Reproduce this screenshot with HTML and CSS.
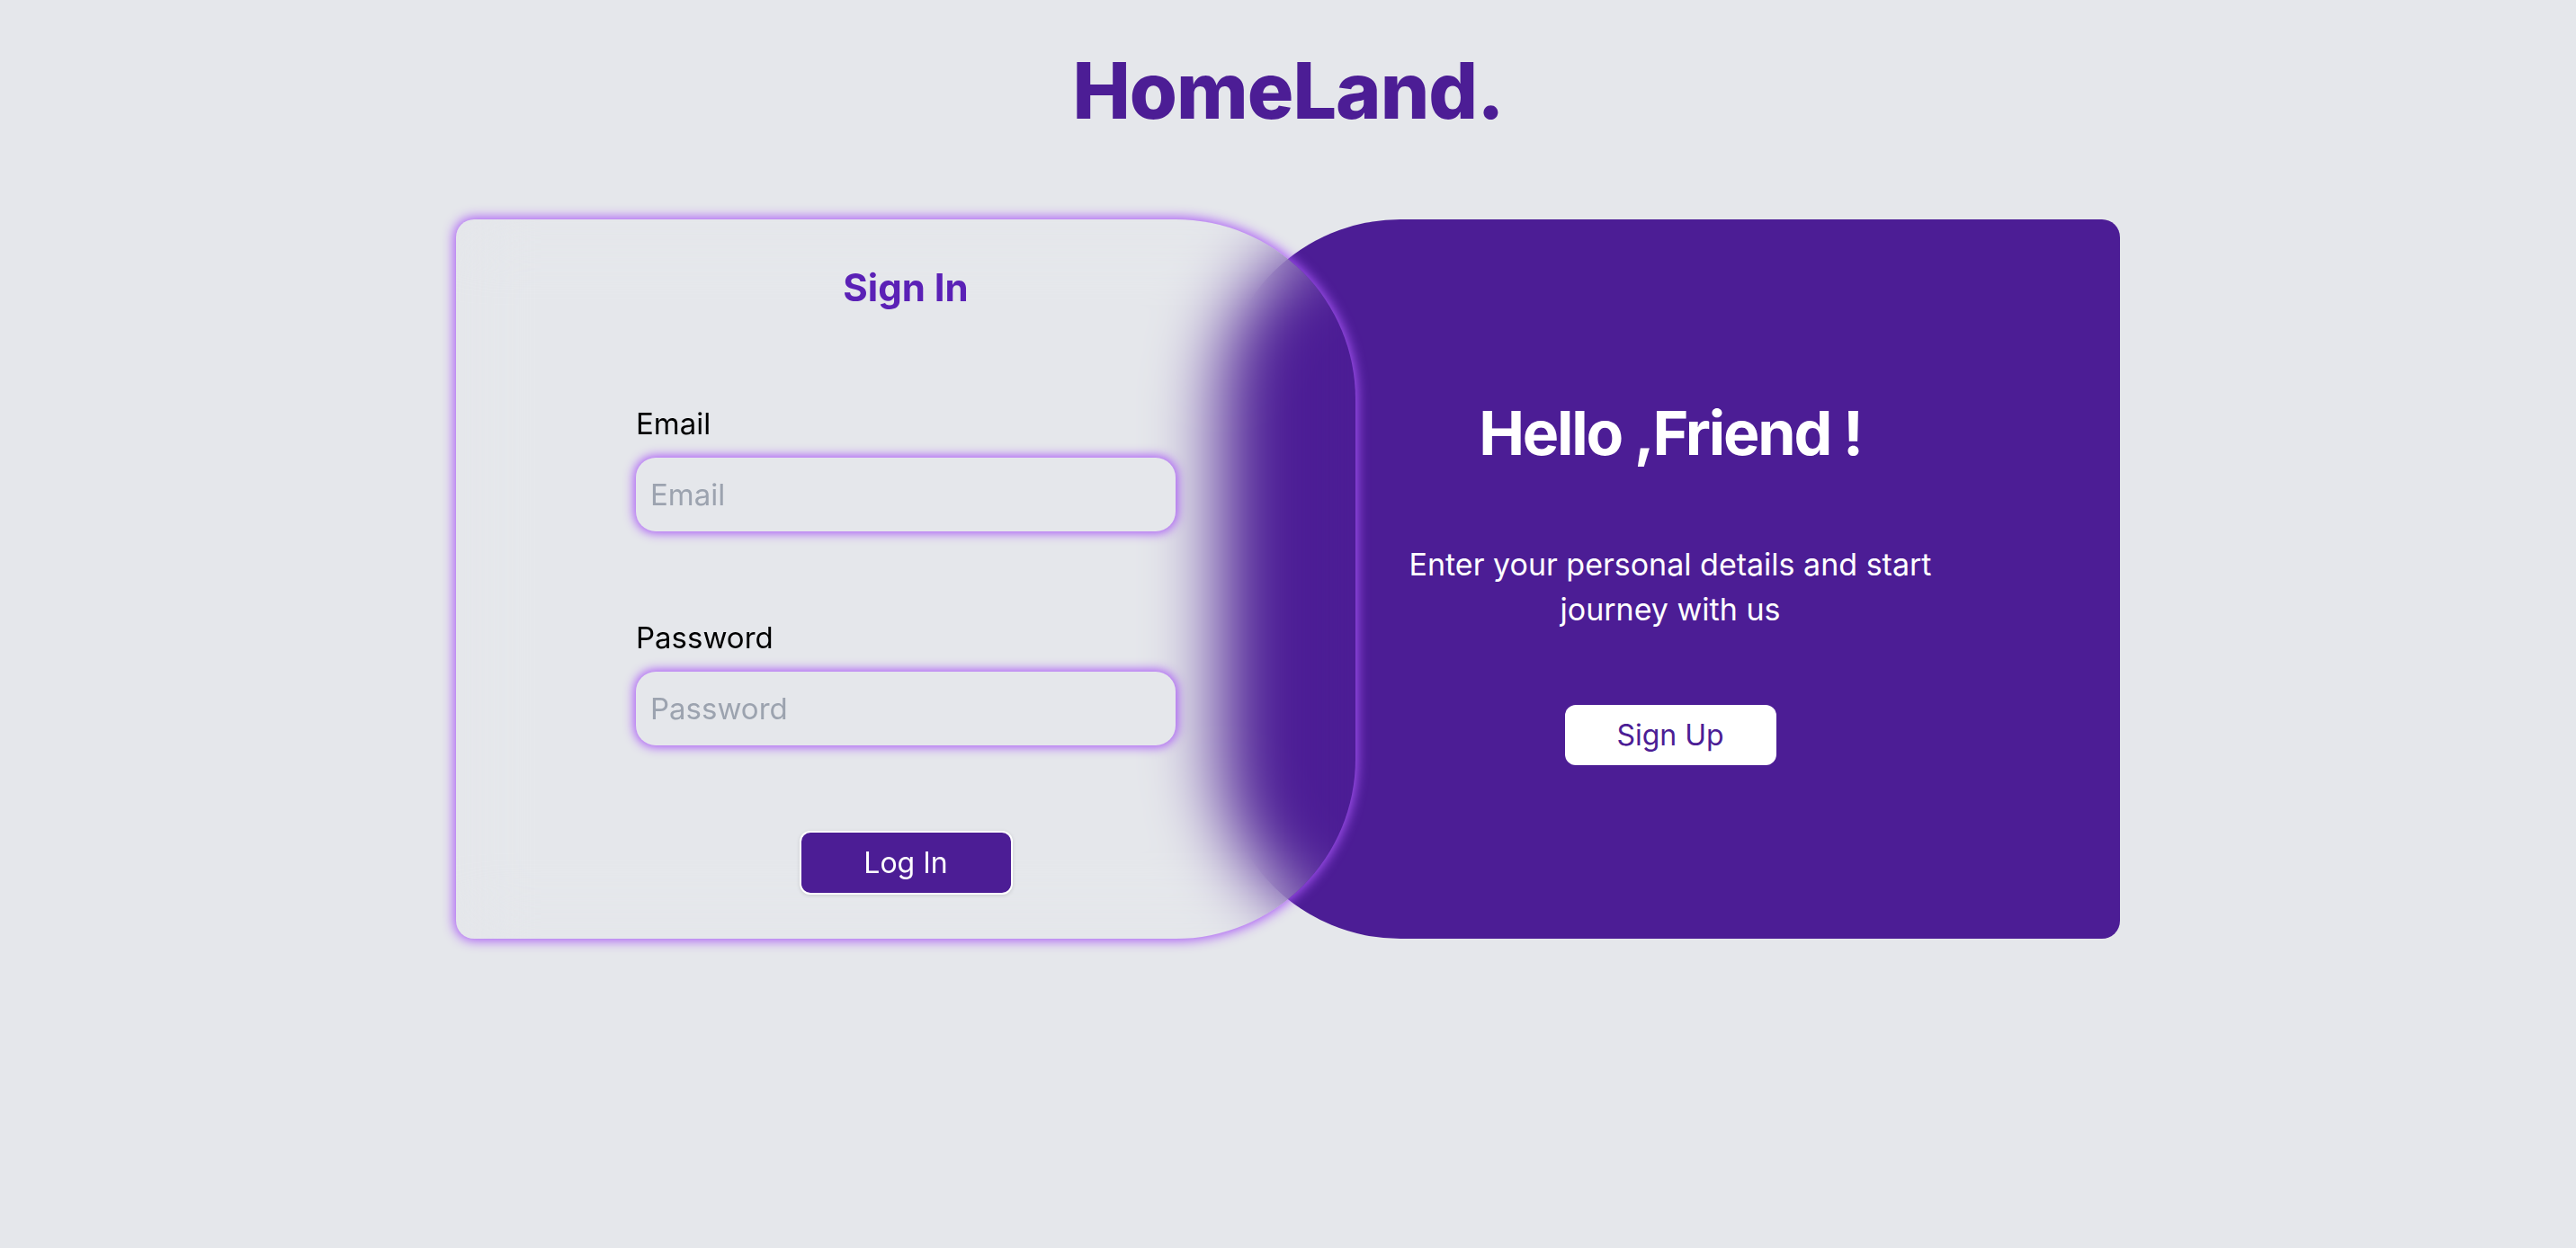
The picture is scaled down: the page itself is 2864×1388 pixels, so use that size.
FILE: index.html
```html
<!DOCTYPE html>
<html lang="en">
<head>
<meta charset="utf-8">
<title>HomeLand. – Sign In</title>
<link rel="stylesheet" href="styles.css">
</head>
<body class="page">
  <h1 class="brand">HomeLand.</h1>
  <main class="auth">
    <section class="signin">
      <h2 class="signin__title">Sign In</h2>
      <form class="form">
        <label class="field">
          <span class="field__label">Email</span>
          <input class="field__input" type="email" placeholder="Email">
        </label>
        <label class="field field--second">
          <span class="field__label">Password</span>
          <input class="field__input" type="password" placeholder="Password">
        </label>
        <button class="btn-login" type="button">Log In</button>
      </form>
    </section>
    <section class="welcome">
      <h2 class="welcome__title">Hello ,Friend !</h2>
      <p class="welcome__text">Enter your personal details and start journey with us</p>
      <button class="btn-signup" type="button">Sign Up</button>
    </section>
  </main>
</body>
</html>
```
FILE: styles.css
```css
* {
  box-sizing: border-box;
  margin: 0;
  padding: 0;
}

.page {
  background: #e5e7eb;
  font-family: Inter, "Noto Sans", "Liberation Sans", sans-serif;
  min-height: 1388px;
  display: flex;
  flex-direction: column;
  align-items: center;
  padding-top: 58px;
}

.brand {
  font-size: 86px;
  line-height: 1;
  font-weight: 800;
  color: #4c1d95;
  letter-spacing: -1px;
}

.auth {
  display: flex;
  margin-top: 100px;
}

.signin {
  z-index: 2;
  width: 1000px;
  height: 800px;
  border-radius: 20px 200px 200px 20px;
  background: rgba(229, 231, 235, 0);
  -webkit-backdrop-filter: blur(40px);
  backdrop-filter: blur(40px);
  box-shadow: 0 0 13px 2px #a855f7;
  display: flex;
  flex-direction: column;
  align-items: center;
  padding-top: 55px;
}

.signin__title {
  font-size: 42px;
  line-height: 1;
  font-weight: 700;
  color: #5b21b6;
}

.form {
  width: 600px;
  display: flex;
  flex-direction: column;
  margin-top: 114px;
}

.field {
  display: flex;
  flex-direction: column;
  gap: 21px;
}

.field--second {
  margin-top: 102px;
}

.field__label {
  font-size: 33px;
  line-height: 1;
  color: #000;
}

.field__input {
  height: 82px;
  width: 100%;
  border: none;
  outline: none;
  border-radius: 22px;
  background: #e5e7eb;
  box-shadow: 0 0 12px 2px #a855f7;
  padding: 0 16px;
  font-family: inherit;
  font-size: 33px;
  color: #111;
}

.field__input::placeholder {
  color: #9ca3af;
}

.btn-login {
  align-self: center;
  margin-top: 95px;
  width: 237px;
  height: 71px;
  background: #4c1d95;
  color: #fff;
  border: 2px solid #fff;
  border-radius: 12px;
  box-shadow: 0 1px 4px rgba(0, 0, 0, 0.12);
  font-family: inherit;
  font-size: 32px;
}

.welcome {
  width: 1000px;
  height: 800px;
  margin-left: -150px;
  background: #4c1d95;
  border-radius: 200px 20px 20px 200px;
  display: flex;
  flex-direction: column;
  align-items: center;
  padding-top: 203px;
  color: #fff;
}

.welcome__title {
  font-size: 68px;
  line-height: 1;
  font-weight: 700;
  letter-spacing: -2.2px;
}

.welcome__text {
  margin-top: 88px;
  width: 660px;
  text-align: center;
  font-size: 34px;
  line-height: 50px;
}

.btn-signup {
  margin-top: 81px;
  width: 235px;
  height: 67px;
  background: #fff;
  color: #4c1d95;
  border: none;
  border-radius: 12px;
  font-family: inherit;
  font-size: 32px;
}
```
